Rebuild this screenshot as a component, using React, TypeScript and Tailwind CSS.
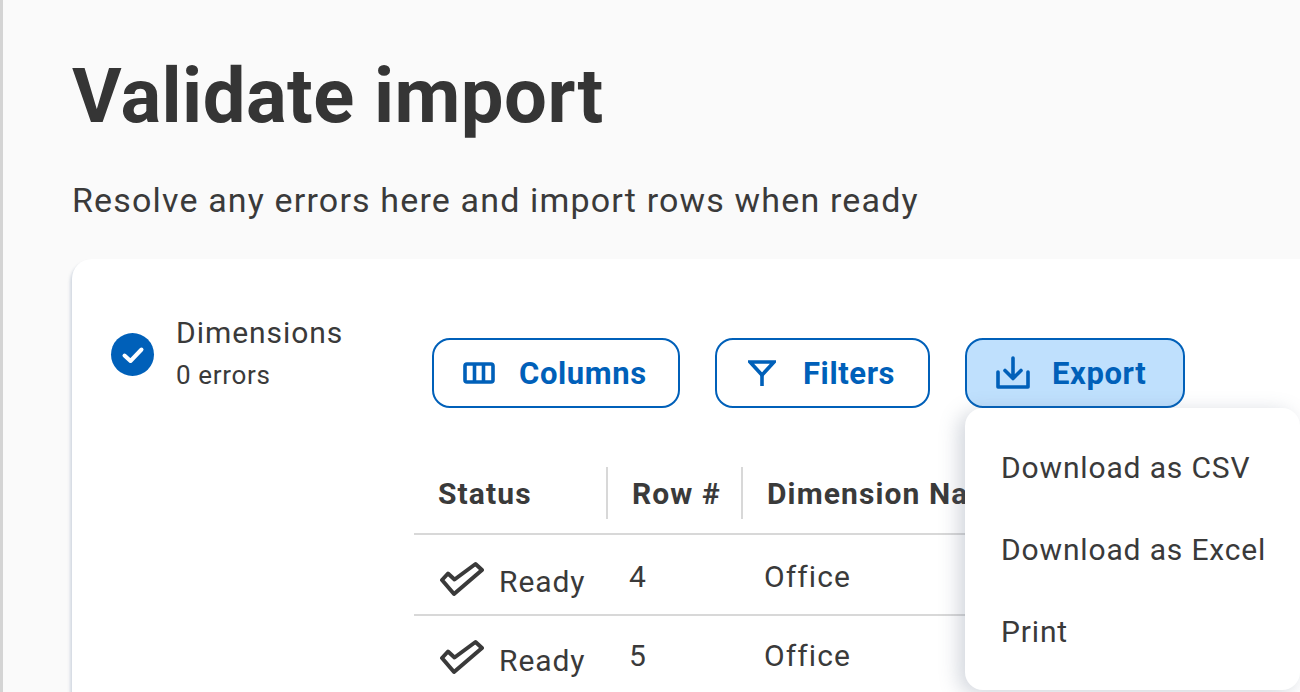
const font = "font-['Roboto',sans-serif]";

function DoubleCheck() {
  return (
    <svg width="45" height="36" viewBox="0 0 45 36" fill="none" className="shrink-0 translate-y-[4px]">
      <path d="M3 19 L9 12.5 L15.5 18.5 L36.5 3 L43 9 L15 33 Z" stroke="#3a3a3a" strokeWidth="4" strokeLinejoin="round" />
    </svg>
  );
}

function Row({ n, h }: { n: string; h: string }) {
  return (
    <div className={`flex items-center text-[30px] tracking-[0.9px] text-[#3a3a3a] ${h}`}>
      <div className="flex w-[216px] items-center gap-[15px] pl-[25px]">
        <DoubleCheck />
        <span className="translate-y-[7px]">Ready</span>
      </div>
      <div className="-ml-[1px] w-[135px] translate-y-[2px]">{n}</div>
      <div className="translate-y-[2px] tracking-[1.1px]">Office</div>
    </div>
  );
}

function Button({ children, label, cls, active }: { children: React.ReactNode; label: string; cls: string; active?: boolean }) {
  return (
    <button className={`flex h-[70px] items-center rounded-[18px] border-2 border-[#0060b9] text-[31px] font-bold tracking-[0.6px] text-[#0060b9] ${cls} ${active ? "bg-[#bfe0fd]" : "bg-white"}`}>
      {children}
      <span className="translate-y-[1px]">{label}</span>
    </button>
  );
}

export default function App() {
  return (
    <div className={`${font} h-[692px] w-[1300px] overflow-hidden border-l-[3px] border-[#d4d4d4] bg-[#fafafa] pl-[69px] text-[#3a3a3a]`}>
      <h1 className="pt-[52px] text-[76px] leading-[88px] font-bold tracking-[0.45px] text-[#353535]">Validate import</h1>
      <p className="mt-[39px] text-[34px] leading-[42px] tracking-[1.16px]">Resolve any errors here and import rows when ready</p>
      <div className="relative mt-[38px] flex h-[500px] rounded-tl-[20px] bg-white shadow-[-2px_3px_3px_rgba(120,140,170,0.3)]">
        <div className="flex w-[342px] shrink-0 items-start gap-[22px] pt-[56px] pl-[39px]">
          <div className="mt-[18px] flex h-[43px] w-[43px] items-center justify-center rounded-full bg-[#0060b9]">
            <svg width="24" height="24" viewBox="0 0 24 24" fill="none">
              <path d="M3.5 12.5 L9.5 18 L20.5 6.5" stroke="white" strokeWidth="4" strokeLinecap="round" strokeLinejoin="round" />
            </svg>
          </div>
          <div>
            <div className="text-[30px] leading-[36px] tracking-[0.95px]">Dimensions</div>
            <div className="mt-[7px] text-[26px] leading-[34px] tracking-[0.65px]">0 errors</div>
          </div>
        </div>
        <div className="flex-1">
          <div className="flex gap-[35px] pt-[79px] pl-[18px]">
            <Button label="Columns" cls="w-[248px] gap-[24px] pl-[29px]">
              <svg width="32" height="24" viewBox="0 0 32 24" fill="none" stroke="#0060b9" strokeWidth="3.6">
                <rect x="2" y="3" width="28" height="18" rx="2" />
                <path d="M11.5 3 V21 M20.5 3 V21" />
              </svg>
            </Button>
            <Button label="Filters" cls="w-[215px] gap-[27px] pl-[31px]">
              <svg width="28" height="28" viewBox="0 0 28 28" fill="none" stroke="#0060b9" strokeWidth="3.6">
                <path d="M2 3 H26 L14 16 Z" strokeLinejoin="miter" />
                <path d="M14 15 V27" />
              </svg>
            </Button>
            <Button label="Export" cls="w-[220px] gap-[22px] pl-[29px]" active>
              <svg width="34" height="34" viewBox="0 0 34 34" fill="none" stroke="#0060b9" strokeWidth="3.6" strokeLinecap="round" strokeLinejoin="round">
                <path d="M17 2 V22 M9 14.5 L17 22.5 L25 14.5" />
                <path d="M2 16 V31 H32 V16" />
              </svg>
            </Button>
          </div>
          <div className="mt-[57px] flex h-[70px] items-start border-b-2 border-[#d8d8d8] pt-[2px] text-[30px] font-bold tracking-[1.1px] text-[#3a3a3a]">
            <div className="flex h-[52px] w-[194px] items-center border-r-2 border-[#d8d8d8] pl-[24px]">Status</div>
            <div className="flex h-[52px] w-[135px] items-center border-r-2 border-[#d8d8d8] pl-[24px]">Row #</div>
            <div className="flex h-[52px] items-center pl-[24px] whitespace-nowrap">Dimension Name</div>
          </div>
          <div className="border-b-2 border-[#d8d8d8]">
            <Row n="4" h="h-[79px]" />
          </div>
          <Row n="5" h="h-[74px]" />
        </div>
        <div className="absolute top-[149px] left-[893px] z-10 flex h-[282px] w-[335px] flex-col rounded-[18px] bg-white pl-[36px] text-[30px] tracking-[0.85px] shadow-[-6px_4px_20px_rgba(90,105,130,0.28)]">
          <div className="flex h-[83px] items-center pt-[35px]">Download as CSV</div>
          <div className="flex h-[82px] items-center pt-[35px]">Download as Excel</div>
          <div className="flex h-[82px] items-center pt-[35px]">Print</div>
        </div>
      </div>
    </div>
  );
}
